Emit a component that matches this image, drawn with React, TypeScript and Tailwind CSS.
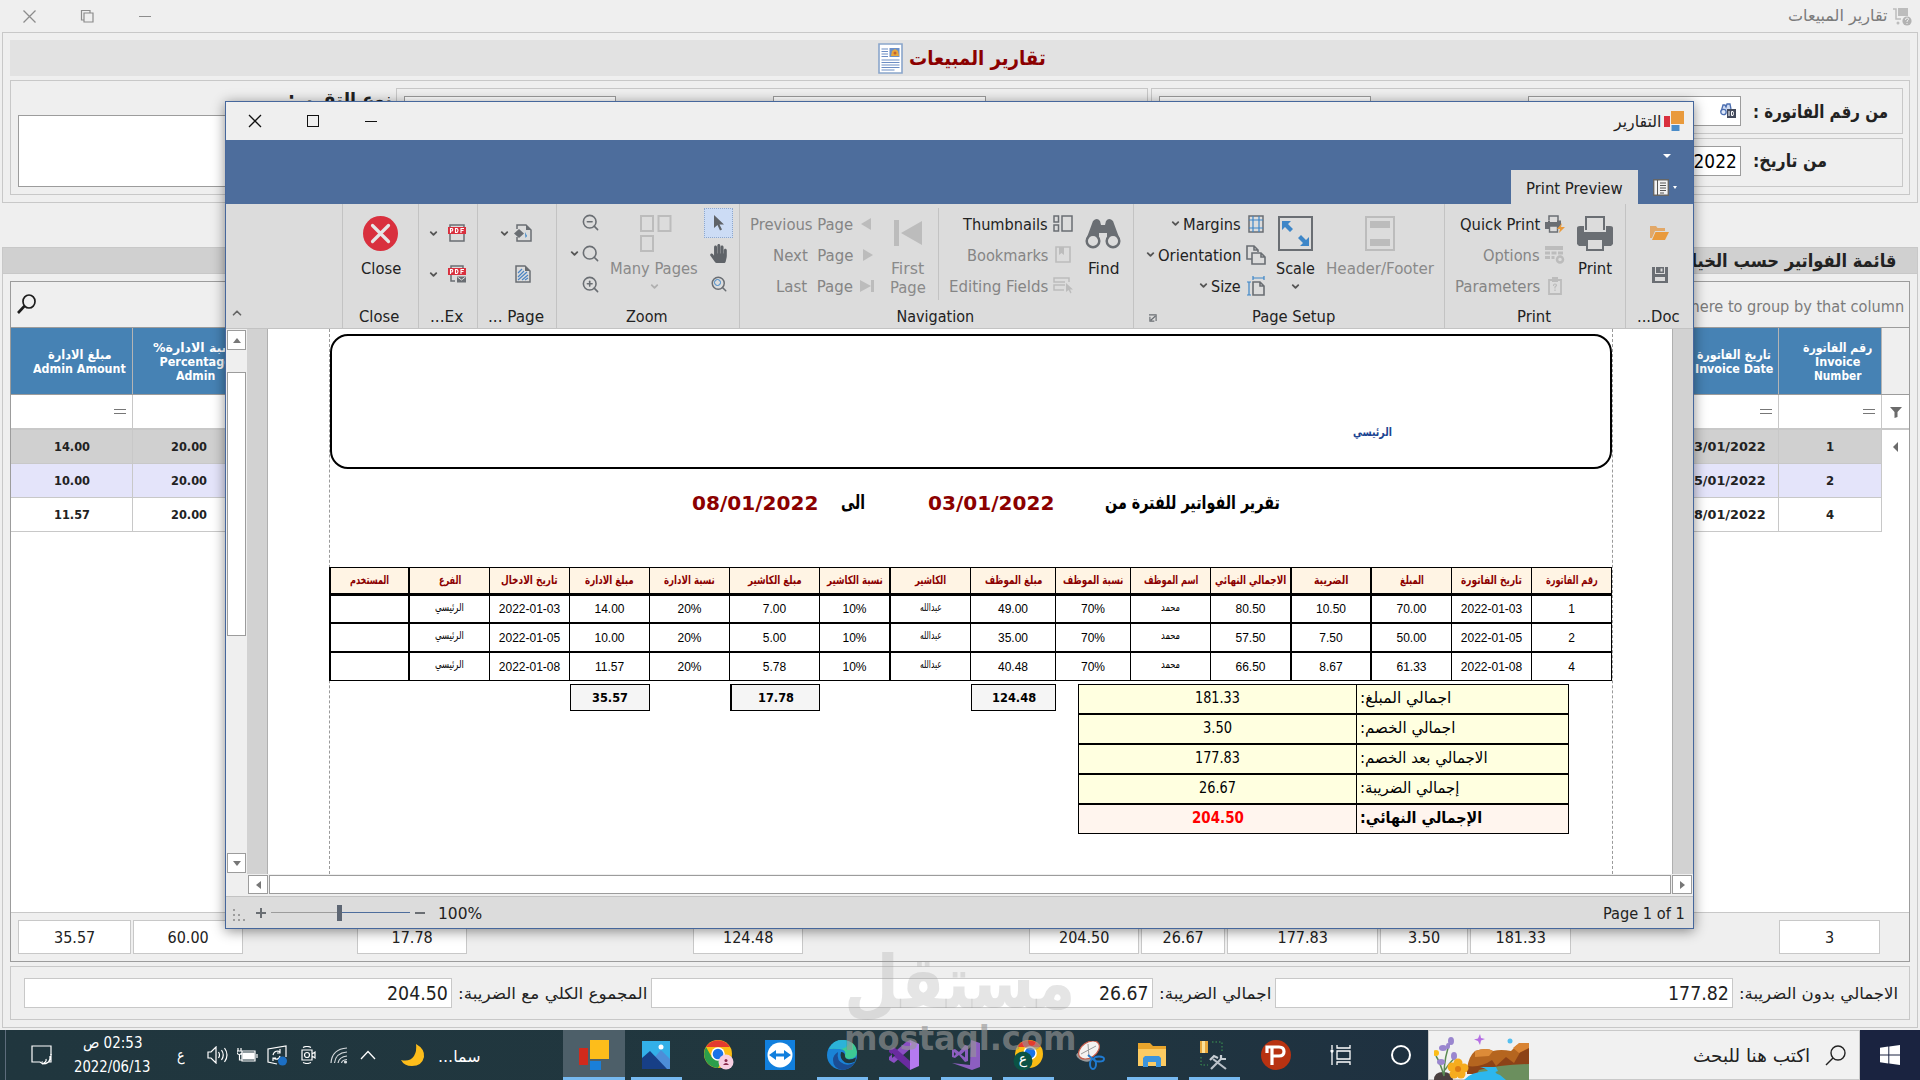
import { useLayoutEffect, useRef, useState, type ReactNode } from "react";
import clsx from "clsx";
import { FaHandPaper } from "react-icons/fa";
import { ChevronDown, ChevronUp, Search, ZoomIn, ZoomOut } from "lucide-react";

const TAHOMA = "font-['DejaVu_Sans_Condensed','DejaVu_Sans',sans-serif]";

// Single line label stretched to an exact width
function Fit({ w, className, children }: { w: number; className?: string; children: ReactNode }) {
  const ref = useRef<HTMLSpanElement>(null);
  const [scale, setScale] = useState(1);

  useLayoutEffect(() => {
    if (ref.current) setScale(w / ref.current.offsetWidth);
  }, [w, children]);

  return (
    <span dir="ltr" className={clsx("inline-flex shrink-0", className)} style={{ width: w }}>
      <span
        ref={ref}
        dir="auto"
        className="inline-block shrink-0 origin-left whitespace-pre"
        style={{ transform: `scaleX(${scale})` }}
      >
        {children}
      </span>
    </span>
  );
}

/* ---------- main window ---------- */

function TitleBar() {
  return (
    <div className="flex h-8 shrink-0 items-center">
      <svg className="ml-[22px] size-[15px]" viewBox="0 0 15 15" stroke="#8c8c8c" strokeWidth="1.3">
        <path d="M1.5 1.5l12 12M13.5 1.5l-12 12" />
      </svg>
      <svg className="ml-[43px] size-[15px]" viewBox="0 0 15 15" fill="none" stroke="#8c8c8c" strokeWidth="1.2">
        <path d="M4 11H1.5V1.5H10V4M4 4h9v9H4z" />
      </svg>
      <div className="ml-[44px] h-px w-3 bg-[#8c8c8c]" />
      <Fit w={99} className="ml-auto text-[16px] text-[#7b7b7b]">تقارير المبيعات</Fit>
      <svg className="mr-[8px] ml-[6px] size-[19px]" viewBox="0 0 19 19">
        <path d="M0 2h3v10h5" fill="none" stroke="#bdbdbd" strokeWidth="1.5" />
        <path d="M5 1h10v8H5z" fill="#bdbdbd" />
        <circle cx="5" cy="16" r="1.5" fill="#bdbdbd" />
        <circle cx="14" cy="14" r="4.6" fill="#b3b3b3" />
        <path d="M12.5 13q0-2 1.6-2t1.4 1.6l-1.4 1.4v1M14 16v1" fill="none" stroke="#efefef" />
      </svg>
    </div>
  );
}

function ReportIcon() {
  return (
    <svg className="mr-[6px] h-[31px] w-[25px]" viewBox="0 0 25 31">
      <path d="M1 1h23v29H1z" fill="#fff" stroke="#8aa6cb" strokeWidth="1.6" />
      <path d="M3.500 6h6.500M3.500 8.500h6.500M3.500 11h6.500M3.500 13.500h6.500M3.500 17h18M3.500 19.500h18M3.500 22h18M3.500 24.500h18M3.500 27h13" stroke="#6d8dc4" strokeWidth="1.200" />
      <path d="M11.500 5h10v9h-10z" fill="#6a8fc9" />
      <path d="M13 13l1-5 3-2 3 2 1 5z" fill="#e7a73c" />
      <circle cx="17" cy="10" r="1.500" fill="#c5612c" />
    </svg>
  );
}

const box = "border border-[#c8c8c8]";
const field = "border border-[#9c9c9c] bg-white";

function Filters() {
  return (
    <div className={clsx("mx-[2px] flex h-[171px] shrink-0 flex-col px-[7px] pt-[7px]", box)}>
      <div className="flex h-9 shrink-0 items-center justify-center bg-[#e2e2e2] pl-[4px]">
        <ReportIcon />
        <Fit w={137} className="text-[20px] font-bold text-[#8b0000]">تقارير المبيعات</Fit>
      </div>
      <div className={clsx("mt-1 flex h-[115px]", box)}>
        <div className="flex w-[385px] flex-col pl-[7px] pt-[4px]">
          <Fit w={104} className="ml-[270px] h-[30px] text-[19px] font-bold text-[#222]">نوع التقرير:</Fit>
          <div className={clsx("h-[72px]", field)} />
        </div>
        <div className={clsx("mt-[7px] flex h-[100px] w-[752px] pl-[7px] pt-[7px]", box)}>
          <div className={clsx("h-[30px] w-[212px]", field)} />
          <div className={clsx("ml-[157px] h-[30px] w-[213px]", field)} />
        </div>
        <div className="ml-[3px] mt-[7px] flex w-[752px] flex-col gap-1">
          <div className={clsx("flex h-[46px] items-center pl-[7px]", box)}>
            <div className={clsx("h-[30px] w-[212px]", field)} />
            <div className={clsx("ml-[157px] flex h-[30px] w-[213px] items-center justify-end pr-1", field)}>
              <svg className="size-4" viewBox="0 0 16 16">
                <path d="M1 9L3 2h2l1 2 1-3h3l1 5" fill="#cfdcf3" stroke="#4a6db0" strokeWidth="1.300" />
                <circle cx="3.500" cy="9" r="2.700" fill="#dfe9fa" stroke="#4a6db0" strokeWidth="1.300" />
                <path d="M7 6h9v9H7z" fill="#434a5c" />
                <path d="M9 8v5M11.500 8.500v4h1.500q1-2 0-4z" fill="none" stroke="#fff" />
              </svg>
            </div>
            <Fit w={135} className="ml-3 text-[18px] font-bold text-[#222]">من رقم الفاتورة :</Fit>
          </div>
          <div className={clsx("flex h-[49px] items-start pl-[7px] pt-[7px]", box)}>
            <div className={clsx("h-[30px] w-[212px]", field)} />
            <div className={clsx("ml-[157px] flex h-[30px] w-[213px] items-center justify-end pr-[3px] text-[20px]", field)}>
              <Fit w={98}>03/01/2022</Fit>
            </div>
            <Fit w={74} className="mt-[1px] ml-3 text-[18px] font-bold text-[#222]">من تاريخ:</Fit>
          </div>
        </div>
      </div>
    </div>
  );
}

const gridRows = [
  { bg: "bg-[#d0d0d0]", amount: "14.00", date: "03/01/2022", num: "1" },
  { bg: "bg-[#e4e4fa]", amount: "10.00", date: "05/01/2022", num: "2" },
  { bg: "bg-white", amount: "11.57", date: "08/01/2022", num: "4" },
];

const footerCells = [
  { cls: "ml-[7px] w-[113px]", v: "35.57", w: 41 },
  { cls: "ml-[2px] w-[110px]", v: "60.00", w: 41 },
  { cls: "ml-[114px] w-[110px]", v: "17.78", w: 41 },
  { cls: "ml-[226px] w-[110px]", v: "124.48", w: 50 },
  { cls: "ml-[226px] w-[110px]", v: "204.50", w: 50 },
  { cls: "ml-[2px] w-[84px]", v: "26.67", w: 41 },
  { cls: "ml-[2px] w-[151px]", v: "177.83", w: 50 },
  { cls: "ml-[2px] w-[88px]", v: "3.50", w: 32 },
  { cls: "ml-[2px] w-[101px]", v: "181.33", w: 50 },
  { cls: "ml-[208px] w-[101px]", v: "3", w: 9 },
];

function HeadCell({ className, lines }: { className: string; lines: [string, number][] }) {
  return (
    <div className={clsx("flex flex-col items-center justify-center bg-[#4682b4] pt-[1px] text-[12.5px] leading-[14px] font-bold text-white", className)}>
      {lines.map(([t, w]) => (
        <Fit key={t} w={w}>{t}</Fit>
      ))}
    </div>
  );
}

function EqualMark() {
  return <div className="mr-[6px] h-[5px] w-3 border-y border-[#777]" />;
}

function InvoiceGrid() {
  return (
    <div className="flex h-[681px] flex-col border border-[#9c9c9c] bg-white">
      <div className="flex h-[45px] shrink-0 items-center justify-between bg-[#efefef] pr-[5px] pl-[6px]">
        <svg className="-mt-[1px] h-[20px] w-[19px]" viewBox="0 0 19 20" fill="none" stroke="#1c1c1c">
          <ellipse cx="12" cy="7.500" rx="6" ry="6.500" strokeWidth="1.700" />
          <path d="M7.500 12L1 19" strokeWidth="2.600" />
        </svg>
        <Fit w={381} className="mt-[5px] text-[16px] text-[#7b7b7b]">Drag a column header here to group by that column</Fit>
      </div>
      <div className="flex h-[68px] shrink-0 border-y border-[#9c9c9c] bg-[#efefef]">
        <HeadCell className="w-[122px] border-r border-[#b4b4b4] pl-4" lines={[["مبلغ الادارة", 64], ["Admin Amount", 93]]} />
        <HeadCell className="w-[113px] pl-3" lines={[["نسبة الادارة%", 86], ["Percentage", 72], ["Admin", 39]]} />
        <HeadCell className="ml-auto w-[113px] border-r border-[#b4b4b4] pl-[23px]" lines={[["تاريخ الفاتورة", 74], ["Invoice Date", 78]]} />
        <HeadCell className="w-[103px] border-r border-[#b4b4b4] pl-[15px]" lines={[["رقم الفاتورة", 69], ["Invoice", 45], ["Number", 47]]} />
        <div className="w-[27px]" />
      </div>
      <div className="flex h-[35px] shrink-0 border-b-2 border-[#c8c8c8]">
        <div className="flex w-[122px] items-center justify-end border-r border-[#c8c8c8]"><EqualMark /></div>
        <div className="ml-auto flex w-[113px] items-center justify-end border-r border-[#c8c8c8]"><EqualMark /></div>
        <div className="flex w-[103px] items-center justify-end border-r border-[#c8c8c8]"><EqualMark /></div>
        <div className="flex w-[27px] items-center justify-center">
          <svg className="size-3" viewBox="0 0 12 12" fill="#6b6b6b"><path d="M0 1h12L7.500 6v5l-3 1V6z" /></svg>
        </div>
      </div>
      {gridRows.map((r, i) => (
        <div key={r.num} className="flex h-[34px] shrink-0 text-[13px] font-bold text-[#222]">
          <div className={clsx("flex w-[122px] items-center justify-center border-r border-b border-[#c8c8c8]", r.bg)}>
            <Fit w={36}>{r.amount}</Fit>
          </div>
          <div className={clsx("flex w-[112px] items-center justify-center border-b border-[#c8c8c8]", r.bg)}>
            <Fit w={36}>20.00</Fit>
          </div>
          <div className={clsx("ml-auto flex w-[113px] items-center justify-end border-r border-b border-[#c8c8c8] pr-3", r.bg)}>
            <Fit w={81}>{r.date}</Fit>
          </div>
          <div className={clsx("flex w-[103px] items-center justify-center border-r border-b border-[#c8c8c8]", r.bg)}>
            <Fit w={8}>{r.num}</Fit>
          </div>
          <div className="flex w-[27px] items-center justify-center">
            {i === 0 && <div className="border-y-[5px] border-r-[5px] border-y-transparent border-r-[#6b6b6b]" />}
          </div>
        </div>
      ))}
      <div className="mt-auto flex h-[49px] border-t border-[#c8c8c8] bg-[#efefef] pt-[7px]">
        {footerCells.map((c, i) => (
          <div key={i} className={clsx("flex h-[34px] shrink-0 items-center justify-center pt-[2px] text-[16px] text-[#222]", box, "bg-white", c.cls)}>
            <Fit w={c.w}>{c.v}</Fit>
          </div>
        ))}
      </div>
    </div>
  );
}

function TotalsPanel() {
  const value = clsx("flex h-[30px] items-center justify-end pr-[3px] text-[20px] text-[#222]", box, "bg-white");
  const label = "text-[16px] text-[#222] mt-[2px]";
  return (
    <div className={clsx("mt-1 flex h-[54px] items-center pl-[13px]", box)}>
      <div className={clsx(value, "w-[428px]")}><Fit w={61}>204.50</Fit></div>
      <Fit w={189} className={clsx(label, "ml-[6px]")}>المجموع الكلي مع الضريبة:</Fit>
      <div className={clsx(value, "ml-[4px] w-[502px]")}><Fit w={50}>26.67</Fit></div>
      <Fit w={112} className={clsx(label, "ml-[6px]")}>اجمالي الضريبة:</Fit>
      <div className={clsx(value, "ml-[4px] w-[458px]")}><Fit w={61}>177.82</Fit></div>
      <Fit w={159} className={clsx(label, "ml-[6px]")}>الاجمالي بدون الضريبة:</Fit>
    </div>
  );
}

/* ---------- report dialog ---------- */

const G = "#6a6e73";
const D = "#bcbcbc";

function Chev({ className, light }: { className?: string; light?: boolean }) {
  return <ChevronDown className={clsx("size-[11px] shrink-0", light ? "text-[#b0b0b0]" : "text-[#555]", className)} strokeWidth={4} />;
}

function Group({ className, label, w, children, labelClass }: { className: string; label: string; w: number; children: ReactNode; labelClass?: string }) {
  return (
    <div className={clsx("flex h-[124px] shrink-0 flex-col border-l border-[#c3c3c3]", className)}>
      <div className="flex h-[102px]">{children}</div>
      <div className={clsx("flex h-[22px] items-center justify-center pr-[2px]", labelClass)}>
        <Fit w={w}>{label}</Fit>
      </div>
    </div>
  );
}

function PdfIcon({ mail }: { mail?: boolean }) {
  return (
    <svg className="size-[18px]" viewBox="0 0 18 18">
      <path d={mail ? "M3 4V1h12v3M3 9v7h4" : "M2 4V1h14v3M2 9v8h14V9"} fill="none" stroke={G} strokeWidth="1.500" />
      <path d="M0 3h18v7H0z" fill="#d9303e" />
      <path d="M2.500 9V4.500h1.500q1.500 1.200 0 2.500h-1.500M7.500 4.500v4h1.500q2-2 0-4zM13 9V4.500h3M13 6.500h2.500" fill="none" stroke="#fff" strokeWidth="1.100" />
      {mail && <path d="M9 11.500h9v6H9z" fill={G} />}
      {mail && <path d="M9.500 12l4 3 4-3" fill="none" stroke="#dcdcdc" />}
    </svg>
  );
}

function BigButton({ className, label, w, disabled, children }: { className?: string; label: string; w: number; disabled?: boolean; children: ReactNode }) {
  return (
    <div className={clsx("flex flex-col items-center pt-3", disabled && "text-[#8a8a8a]", className)}>
      <div className="flex h-[34px] items-center">{children}</div>
      <Fit w={w} className="mt-[9px] h-5 leading-5">{label}</Fit>
    </div>
  );
}

function SmallRow({ label, w, disabled, chev, children }: { label: string; w: number; disabled?: boolean; chev?: boolean; children: ReactNode }) {
  return (
    <div className={clsx("flex h-[31px] items-center justify-end", disabled && "text-[#858585]")}>
      {chev && <Chev className="mr-[2px]" />}
      <Fit w={w} className="mt-[2px]">{label}</Fit>
      <div className="ml-[5px] flex w-5 justify-center">{children}</div>
    </div>
  );
}

function Ribbon() {
  return (
    <div className="flex h-[125px] border-b border-[#c3c3c3] bg-[#dcdcdc] text-[16px] text-[#222]">
      <div className="flex w-[116px] items-end pb-[8px] pl-[4px]">
        <ChevronUp className="size-[14px] text-[#666]" strokeWidth={3} />
      </div>
      <Group className="w-[76px]" label="Close" w={40} labelClass="pr-[4px]">
        <BigButton className="w-full" label="Close" w={40}>
          <svg className="size-[35px]" viewBox="0 0 35 35">
            <circle cx="17.500" cy="17.500" r="17.500" fill="#d9303e" />
            <path d="M9.500 9.500l16 16M25.500 9.500l-16 16" stroke="#e6e6e6" strokeWidth="3.200" strokeLinecap="round" />
          </svg>
        </BigButton>
      </Group>
      <Group className="w-[59px]" label="...Ex" w={33} labelClass="pr-[4px]">
        <div className="flex flex-col gap-[23px] pt-5 pl-[9px]">
          <div className="flex items-center gap-[9px]"><Chev /><PdfIcon /></div>
          <div className="flex items-center gap-[9px]"><Chev /><PdfIcon mail /></div>
        </div>
      </Group>
      <Group className="w-[79px]" label="... Page" w={56}>
        <div className="flex w-full flex-col items-end gap-[23px] pt-5 pr-[24px]">
          <div className="flex items-center gap-[4px]">
            <Chev />
            <svg className="size-[18px]" viewBox="0 0 18 18">
              <path d="M3 5V1h9l5 5v11H3v-4" fill="none" stroke={G} strokeWidth="1.500" />
              <path d="M12 1v5h5z" fill={G} />
              <path d="M5 5l5 4.500L5 14 0 9.500z" fill={G} />
              <path d="M11 8l2 4-1.500 2z" fill="#3d86c8" />
            </svg>
          </div>
          <svg className="size-[18px]" viewBox="0 0 18 18">
            <path d="M2 1h9l5 5v11H2z" fill="none" stroke={G} strokeWidth="1.500" />
            <path d="M11 1v5h5z" fill={G} />
            <path d="M4 8l4-4M4 12l6-6M4 15l9-8M8 15l6-5M11 15l3-2" stroke="#4a84c4" strokeWidth="1.200" />
          </svg>
        </div>
      </Group>
      <Group className="w-[183px]" label="Zoom" w={42}>
        <div className="flex w-[43px] flex-col items-end pt-[3px]">
          <div className="flex h-[31px] items-center"><ZoomOut className="size-[19px] text-[#6a6e73]" strokeWidth={2} /></div>
          <div className="flex h-[31px] items-center gap-[1px]"><Chev /><Search className="size-[19px] text-[#6a6e73]" strokeWidth={2} /></div>
          <div className="flex h-[31px] items-center"><ZoomIn className="size-[19px] text-[#6a6e73]" strokeWidth={2} /></div>
        </div>
        <div className="flex w-[104px] flex-col items-center pl-1">
          <BigButton label="Many Pages" w={88} disabled>
            <svg className="-mr-[3px] h-[37px] w-8" viewBox="0 0 32 37" fill="none" stroke={D} strokeWidth="2">
              <path d="M1 1h12v15H1zM18.500 1h12v15h-12zM1 21h12v15H1z" />
            </svg>
          </BigButton>
          <Chev light className="mt-[2px]" />
        </div>
        <div className="flex w-[29px] flex-col items-center pt-1">
          <div className="flex h-[30px] w-[29px] items-center justify-center border border-dotted border-[#8fa8cc] bg-[#ccdcf5]">
            <svg className="h-4 w-3" viewBox="0 0 12 16"><path d="M1 0v13l3.500-3 2.500 5.500 2-1-2.500-5H11z" fill="#5f6368" /></svg>
          </div>
          <FaHandPaper className="mt-[6px] size-[19px] text-[#5f6368]" />
          <div className="relative mt-[12px]">
            <Search className="size-[18px] text-[#6a6e73]" strokeWidth={2} />
            <div className="absolute top-[4px] left-[4px] size-[7px] rounded-full border-[1.500px] border-[#3d86c8]" />
          </div>
        </div>
      </Group>
      <Group className="w-[394px]" label="Navigation" w={78}>
        <div className="flex w-[138px] flex-col pt-1">
          <SmallRow label="Previous Page" w={103} disabled>
            <div className="mr-[5px] border-y-[6px] border-r-[10px] border-y-transparent border-r-[#bcbcbc]" />
          </SmallRow>
          <SmallRow label="Next  Page" w={80} disabled>
            <div className="border-y-[6px] border-l-[10px] border-y-transparent border-l-[#bcbcbc]" />
          </SmallRow>
          <SmallRow label="Last  Page" w={77} disabled>
            <div className="mr-[2px] flex"><div className="border-y-[6px] border-l-[11px] border-y-transparent border-l-[#bcbcbc]" /><div className="h-3 w-[3px] bg-[#bcbcbc]" /></div>
          </SmallRow>
        </div>
        <div className="flex w-[60px] flex-col items-center pr-px">
          <BigButton label="First" w={33} disabled>
            <svg className="h-[26px] w-7" viewBox="0 0 28 26" fill={D}><path d="M0 0h5v26H0zM28 1v24L7 13z" /></svg>
          </BigButton>
          <Fit w={36} className="-mt-[1px] leading-5 text-[#8a8a8a]">Page</Fit>
        </div>
        <div className="mt-1 h-[92px] w-px bg-[#c3c3c3]" />
        <div className="flex w-[134px] flex-col pt-1">
          <SmallRow label="Thumbnails" w={85}>
            <svg className="h-[17px] w-5" viewBox="0 0 20 17" fill="none" stroke={G} strokeWidth="1.500"><path d="M1 1h4.500v6H1zM1 10h4.500v6H1zM9 1h10v15H9z" /></svg>
          </SmallRow>
          <SmallRow label="Bookmarks" w={81} disabled>
            <svg className="h-[17px] w-5" viewBox="0 0 20 17" fill="none" stroke={D} strokeWidth="1.600"><path d="M3 1h14v15H3z" /><path d="M6 1h5v8L8.500 7 6 9z" fill={D} stroke="none" /></svg>
          </SmallRow>
          <SmallRow label="Editing Fields" w={99} disabled>
            <svg className="h-[17px] w-5" viewBox="0 0 20 17" fill="none" stroke={D} strokeWidth="1.500"><path d="M12 5H1V1h15v4M12 8H1v5h10" /><path d="M13 6v9l2.500-2 2 3.500 1-1-1.500-3h3z" fill={D} stroke="none" /></svg>
          </SmallRow>
        </div>
        <BigButton className="ml-[5px] w-[50px]" label="Find" w={31}>
          <svg className="h-[31px] w-9" viewBox="0 0 36 31">
            <path d="M8 3q4-4 7 0l1 4h4l1-4q3-4 7 0l7 19H22v-7h-8v7H1z" fill={G} />
            <circle cx="8" cy="23" r="6.300" fill="#dcdcdc" stroke={G} strokeWidth="2.500" />
            <circle cx="28" cy="23" r="6.300" fill="#dcdcdc" stroke={G} strokeWidth="2.500" />
          </svg>
        </BigButton>
      </Group>
      <div className="relative">
        <Group className="w-[311px]" label="Page Setup" w={83} labelClass="pl-[10px]">
          <div className="flex w-[132px] flex-col pt-1">
            <SmallRow label="Margins" w={58} chev>
              <svg className="h-[18px] w-4" viewBox="0 0 16 18" fill="none"><path d="M1 1h14v16H1z" stroke={G} strokeWidth="1.500" /><path d="M5 1v16M11 1v16M1 5h14M1 13h14" stroke="#3d86c8" strokeWidth="1.200" /></svg>
            </SmallRow>
            <SmallRow label="Orientation" w={83} chev>
              <svg className="h-5 w-5" viewBox="0 0 20 20" fill="none" stroke={G} strokeWidth="1.600"><path d="M6 14H1V1h7l4 4v2M8 1v4h4M6 8h9l4 4v7H6zM15 8v4h4" /></svg>
            </SmallRow>
            <SmallRow label="Size" w={30} chev>
              <svg className="h-5 w-[18px]" viewBox="0 0 18 20" fill="none"><path d="M6 6h7l4 4v9H6zM13 6v4h4" stroke={G} strokeWidth="1.600" /><path d="M6 2h11M6 0v4M17 0v4M2 6v13M0 6h4M0 19h4" stroke="#3d86c8" strokeWidth="1.200" /></svg>
            </SmallRow>
          </div>
          <div className="ml-[8px] flex w-[43px] flex-col items-center">
            <BigButton label="Scale" w={39}>
              <svg className="size-[35px]" viewBox="0 0 35 35"><path d="M1 1h33v33H1z" fill="none" stroke={G} strokeWidth="2" /><path d="M4 5h9l-3 3 5 5-3 3-5-5-3 3zM31 30h-9l3-3-5-5 3-3 5 5 3-3z" fill="#3d86c8" /></svg>
            </BigButton>
            <Chev className="mt-[2px]" />
          </div>
          <BigButton className="ml-[9px]" label="Header/Footer" w={108} disabled>
            <svg className="h-[35px] w-[30px]" viewBox="0 0 30 35"><path d="M1 1h28v33H1z" fill="none" stroke={D} strokeWidth="2" /><path d="M5 5h20v7H5zM5 23h20v7H5z" fill={D} /></svg>
          </BigButton>
        </Group>
        <svg className="absolute top-[110px] left-[16px] size-[8px]" viewBox="0 0 9 9" fill="none" stroke={G}><path d="M0 1h8v7M7 2.500L2 7M1 3v5h5" strokeWidth="1.300" /></svg>
      </div>
      <Group className="w-[181px]" label="Print" w={34}>
        <div className="flex w-[120px] flex-col pt-1">
          <SmallRow label="Quick Print" w={80}>
            <svg className="h-[18px] w-5" viewBox="0 0 20 18"><path d="M4 5V1h9v5" fill="none" stroke={G} strokeWidth="1.500" /><path d="M0 7h3V5.500h2V7h7V5.500h4V10l-3 4H0z" fill={G} /><path d="M4.500 11h8v6h-8z" fill="#dcdcdc" stroke={G} strokeWidth="1.400" /><path d="M17 8l-5 6h3l-1 4 6-6h-4z" fill="#e99a3c" /></svg>
          </SmallRow>
          <SmallRow label="Options" w={57} disabled>
            <svg className="h-[18px] w-5" viewBox="0 0 20 18" fill={D}><path d="M0 0h18v4H0zM0 5.500h5v3H0zM6.500 5.500h5v3h-5zM13 5.500h5v3h-5zM0 10h5v3H0zM6.500 10h3v3h-3z" /><circle cx="15" cy="13.500" r="3" fill="none" stroke={D} strokeWidth="2.500" /></svg>
          </SmallRow>
          <SmallRow label="Parameters" w={85} disabled>
            <svg className="h-[18px] w-5" viewBox="0 0 20 18" fill="none" stroke={D} strokeWidth="1.800"><path d="M4 3h12v14H4z" /><path d="M7 0h6v5H7z" fill={D} stroke="none" /><path d="M8.500 9q0-2 1.500-2t1.500 1.500L10 10v1.500M10 12.500V14" strokeWidth="1.200" /></svg>
          </SmallRow>
        </div>
        <BigButton className="ml-[8px] w-[44px]" label="Print" w={34}>
          <svg className="h-[35px] w-9" viewBox="0 0 36 35"><path d="M9 14V1h18v13" fill="none" stroke={G} strokeWidth="2" /><path d="M0 12q0-2 3-2h4v6h22v-6h4q3 0 3 2v16l-2 2H2l-2-2z" fill={G} /><path d="M10 23h16v11H10z" fill="#dcdcdc" stroke={G} strokeWidth="2" /></svg>
        </BigButton>
      </Group>
      <Group className="w-[68px]" label="...Doc" w={43}>
        <div className="flex w-full flex-col items-center gap-[26px] pt-[21px]">
          <svg className="h-4 w-[19px]" viewBox="0 0 19 16"><path d="M0 1h6l1.500 2H15v3H5L2 13H0z" fill="#e2a868" /><path d="M5.500 7H19l-4 8H2z" fill="#e99a3c" /></svg>
          <svg className="size-4" viewBox="0 0 16 16"><path d="M0 0h3v7h10V0h3v16H0z" fill={G} /><path d="M4 0h8v6H4z" fill={G} /><path d="M8.500 1.500h2v3h-2zM3 10h10v4H3z" fill="#dcdcdc" /></svg>
        </div>
      </Group>
    </div>
  );
}

const columns = [
  { cls: "w-[79px] border-l-2", head: "المستخدم", w: 39 },
  { cls: "w-[81px] border-l-2", head: "الفرع", w: 22 },
  { cls: "w-[80px] border-l", head: "تاريخ الادخال", w: 57 },
  { cls: "w-[80px] border-l", head: "مبلغ الادارة", w: 49 },
  { cls: "w-[80px] border-l", head: "نسبة الادارة", w: 51 },
  { cls: "w-[90px] border-l", head: "مبلغ الكاشير", w: 54 },
  { cls: "w-[70px] border-l", head: "نسبة الكاشير", w: 56 },
  { cls: "w-[81px] border-l-2", head: "الكاشير", w: 31 },
  { cls: "w-[85px] border-l", head: "مبلغ الموظف", w: 57 },
  { cls: "w-[75px] border-l", head: "نسبة الموظف", w: 60 },
  { cls: "w-[80px] border-l", head: "اسم الموظف", w: 54 },
  { cls: "w-[80px] border-l", head: "الاجمالي النهائي", w: 71 },
  { cls: "w-[80px] border-l-2", head: "الضريبة", w: 34 },
  { cls: "w-[81px] border-l-2", head: "المبلغ", w: 24 },
  { cls: "w-[80px] border-l", head: "تاريخ الفاتورة", w: 61 },
  { cls: "w-[81px] border-x", head: "رقم الفاتورة", w: 52 },
];

const reportRows = [
  ["", "الرئيسي", "2022-01-03", "14.00", "20%", "7.00", "10%", "عبدالله", "49.00", "70%", "محمد", "80.50", "10.50", "70.00", "2022-01-03", "1"],
  ["", "الرئيسي", "2022-01-05", "10.00", "20%", "5.00", "10%", "عبدالله", "35.00", "70%", "محمد", "57.50", "7.50", "50.00", "2022-01-05", "2"],
  ["", "الرئيسي", "2022-01-08", "11.57", "20%", "5.78", "10%", "عبدالله", "40.48", "70%", "محمد", "66.50", "8.67", "61.33", "2022-01-08", "4"],
];
const rowHeights = ["h-[28px] border-b-2", "h-[29px] border-b-2", "h-[28px] border-b"];

const arabicWidth: Record<string, number> = { "الرئيسي": 29, "عبدالله": 22, "محمد": 19 };

const summary = [
  { value: "181.33", vw: 45, label: "اجمالي المبلغ:", lw: 91 },
  { value: "3.50", vw: 29, label: "اجمالي الخصم:", lw: 95 },
  { value: "177.83", vw: 45, label: "الاجمالي بعد الخصم:", lw: 128 },
  { value: "26.67", vw: 37, label: "إجمالي الضريبة:", lw: 99 },
];

function ReportPage() {
  return (
    <div className="flex w-[1284px] flex-col border-x border-dashed border-[#9a9a9a] pt-[5px]">
      <div className="flex h-[135px] shrink-0 items-start justify-end rounded-[18px] border-[2.500px] border-black pt-[87px] pr-[218px]">
        <Fit w={39} className="text-[12px] font-bold text-[#1c4592]">الرئيسي</Fit>
      </div>
      <div className="flex h-[98px] shrink-0 items-start pt-[20px] pl-[362px] text-[20px] leading-7 font-bold text-black">
        <Fit w={126} className="text-[#8b0000]">08/01/2022</Fit>
        <Fit w={24} className="-mt-[1px] ml-[23px]">الى</Fit>
        <Fit w={126} className="ml-[63px] text-[#8b0000]">03/01/2022</Fit>
        <Fit w={175} className="-mt-[1px] ml-[51px] text-[19px]">تقرير الفواتير للفترة من</Fit>
      </div>
      <div className="-ml-px flex h-[29px] w-[1283px] shrink-0 border-t border-b-[3px] border-black bg-[#fff4e4] text-[11.500px] font-bold text-[#8b0000]">
        {columns.map((c) => (
          <div key={c.head} className={clsx("flex shrink-0 items-center justify-center border-black", c.cls)}>
            <Fit w={c.w}>{c.head}</Fit>
          </div>
        ))}
      </div>
      {reportRows.map((row, r) => (
        <div key={r} className={clsx("-ml-px flex w-[1283px] shrink-0 border-black text-[12px] text-black", rowHeights[r])}>
          {row.map((v, i) => (
            <div key={i} className={clsx("flex shrink-0 items-center justify-center border-black font-['Liberation_Sans','DejaVu_Sans',sans-serif]", columns[i].cls)}>
              {arabicWidth[v] ? (
                <Fit w={arabicWidth[v]} className="mb-[5px] text-[11px] leading-4">{v}</Fit>
              ) : (
                <span>{v}</span>
              )}
            </div>
          ))}
        </div>
      ))}
      <div className="mt-[3px] flex items-start pl-[240px] text-[13px] font-bold text-black">
        <div className="flex h-[27px] w-[80px] items-center justify-center border border-black bg-[#f5f5f5]"><Fit w={36}>35.57</Fit></div>
        <div className="ml-[80px] flex h-[27px] w-[90px] items-center justify-center border border-l-2 border-black bg-[#f5f5f5]"><Fit w={36}>17.78</Fit></div>
        <div className="ml-[151px] flex h-[27px] w-[85px] items-center justify-center border border-black bg-[#f5f5f5]"><Fit w={44}>124.48</Fit></div>
        <div className="ml-[22px] flex w-[491px] flex-col border border-black text-[15.500px] font-normal">
          {summary.map((s) => (
            <div key={s.label} className="flex h-[30px] border-b-2 border-black bg-[#ffffe0]">
              <div className="flex w-[278px] items-center justify-center border-r border-black"><Fit w={s.vw}>{s.value}</Fit></div>
              <div className="flex items-center pl-[3px]"><Fit w={s.lw}>{s.label}</Fit></div>
            </div>
          ))}
          <div className="flex h-[28px] bg-[#fff5ee] font-bold">
            <div className="flex w-[278px] items-center justify-center border-r border-black text-[#f00]"><Fit w={52}>204.50</Fit></div>
            <div className="flex items-center pl-[3px]"><Fit w={122}>الإجمالي النهائي:</Fit></div>
          </div>
        </div>
      </div>
    </div>
  );
}

const scrollButton = "flex items-center justify-center border border-[#9c9c9c] bg-white";

function PreviewDialog() {
  return (
    <div className="absolute top-[101px] left-[225px] flex h-[828px] w-[1469px] flex-col border border-[#46679c] bg-[#efefef] shadow-[0_2px_12px_rgba(0,0,0,0.45)]">
      <div className="flex h-[38px] shrink-0 items-center">
        <svg className="ml-[22px] size-[14px]" viewBox="0 0 14 14" stroke="#111" strokeWidth="1.300"><path d="M1 1l12 12M13 1L1 13" /></svg>
        <div className="ml-[45px] size-[12px] border border-[#111]" />
        <div className="ml-[46px] h-px w-3 bg-[#111]" />
        <Fit w={47} className="mt-[2px] ml-auto text-[16px] text-[#222]">التقارير</Fit>
        <svg className="mr-[9px] ml-[3px] size-5" viewBox="0 0 20 20">
          <path d="M0 5h6v11H0z" fill="#d9303e" />
          <path d="M7 0h13v13H7z" fill="#e99a3c" />
          <path d="M7.500 14h8v6h-8z" fill="#4a8cc8" />
        </svg>
      </div>
      <div className="flex h-16 shrink-0 flex-col bg-[#4d6d9c]">
        <div className="flex h-[30px] items-center justify-end pt-[2px] pr-[22px]">
          <div className="border-x-[4px] border-t-[4px] border-x-transparent border-t-white" />
        </div>
        <div className="flex h-[34px] justify-end">
          <div className="flex w-[127px] items-center justify-center bg-[#dcdcdc] pt-[3px] text-[16px] text-[#222]"><Fit w={97}>Print Preview</Fit></div>
          <div className="flex w-[55px] items-center pl-[15px]">
            <svg className="h-[17px] w-4" viewBox="0 0 16 17"><path d="M.7.700h14.600v15.600H.7z" fill="#f3f3f3" stroke="#666" strokeWidth="1.400" /><path d="M4.500 1v15M7 4h6M7 6.500h6M7 9h6M7 11.500h6M7 14h4" stroke="#555" /></svg>
            <div className="ml-[4px] border-x-[2.500px] border-t-[3px] border-x-transparent border-t-white" />
          </div>
        </div>
      </div>
      <Ribbon />
      <div className="flex h-[567px] shrink-0">
        <div className="flex w-[21px] flex-col px-[1px] pt-[1px]">
          <div className={clsx(scrollButton, "h-5")}><div className="border-x-[4px] border-b-[5px] border-x-transparent border-b-[#777]" /></div>
          <div className={clsx(scrollButton, "mt-[22px] h-[264px]")} />
          <div className={clsx(scrollButton, "mt-[217px] h-5")}><div className="border-x-[4px] border-t-[5px] border-x-transparent border-t-[#777]" /></div>
        </div>
        <div className="flex flex-1 flex-col">
          <div className="flex h-[545px] shrink-0 overflow-hidden bg-[#d2d2d2] px-5">
            <div className="flex flex-1 border-x border-[#b0b0b0] bg-white pl-[61px]">
              <ReportPage />
            </div>
          </div>
          <div className="flex h-[22px] items-start gap-[1px] px-[1px] pt-[1px]">
            <div className={clsx(scrollButton, "h-[19px] w-5")}><div className="border-y-[4px] border-r-[5px] border-y-transparent border-r-[#777]" /></div>
            <div className={clsx(scrollButton, "h-[19px] flex-1")} />
            <div className={clsx(scrollButton, "h-[19px] w-5")}><div className="border-y-[4px] border-l-[5px] border-y-transparent border-l-[#777]" /></div>
          </div>
        </div>
      </div>
      <div className="flex flex-1 items-center border-t border-[#c3c3c3] bg-[#dcdcdc] pr-[8px] pl-[7px] text-[16px] text-[#222]">
        <svg className="mt-[5px] size-3" viewBox="0 0 12 12" fill="#9c9c9c"><path d="M0 0h2v2H0zM0 5h2v2H0zM5 5h2v2H5zM0 10h2v2H0zM5 10h2v2H5zM10 10h2v2h-2z" /></svg>
        <svg className="ml-[11px] size-[10px]" viewBox="0 0 10 10" stroke={G} strokeWidth="2"><path d="M0 5h10M5 0v10" /></svg>
        <div className="ml-[5px] h-px w-[66px] bg-[#9c9c9c]" />
        <div className="h-4 w-[5px] bg-[#5d6673]" />
        <div className="h-px w-[68px] bg-[#4d6d9c]" />
        <div className="ml-[5px] h-[2px] w-[10px] bg-[#6a6e73]" />
        <Fit w={44} className="mt-[2px] ml-[13px]">100%</Fit>
        <Fit w={82} className="mt-[2px] ml-auto">Page 1 of 1</Fit>
      </div>
    </div>
  );
}

/* ---------- taskbar ---------- */

function AppTile({ active, running, children }: { active?: boolean; running?: boolean; children: ReactNode }) {
  return (
    <div className={clsx("flex h-[50px] w-[62px] shrink-0 flex-col items-center", active && "bg-[#4d5f69]")}>
      <div className="flex h-[47px] items-center pt-[3px]">{children}</div>
      {(active || running) && <div className={clsx("h-[3px] bg-[#76b9f0]", active ? "w-full" : "w-[51px]")} />}
    </div>
  );
}

function Chrome({ children }: { children: ReactNode }) {
  return (
    <svg className="ml-[2px] size-[30px]" viewBox="0 0 30 30">
      <circle cx="14" cy="14" r="14" fill="#fbbc14" />
      <path d="M2 7a14 14 0 0 1 24 0H14z" fill="#e33b2e" />
      <path d="M2 7a14 14 0 0 0 12 21l6-10.500-12 0z" fill="#2c9e4b" />
      <circle cx="14" cy="14" r="6.800" fill="#fff" />
      <circle cx="14" cy="14" r="5.300" fill="#1a73e8" />
      {children}
    </svg>
  );
}

function Taskbar() {
  return (
    <div className="mt-[2px] flex h-[50px] shrink-0 items-center bg-linear-to-r from-[#20363e] via-[#21373f] to-[#1c2a42] text-white">
      <div className="ml-[5px] h-full w-px bg-[#5d6c7c]" />
      <svg className="ml-[25px] h-[21px] w-[21px]" viewBox="0 0 21 21" fill="none" stroke="#fff" strokeWidth="1.200">
        <path d="M12 17H10.500M9 17H1V1h19v9" /><path d="M20 9v8h-3M19 11q1 8-8 8 5-2 4-5M9 17l3 2" />
      </svg>
      <div className="ml-[22px] flex w-[76px] flex-col items-center text-[15.500px] leading-6">
        <Fit w={59}>02:53 ص</Fit>
        <Fit w={76}>2022/06/13</Fit>
      </div>
      <Fit w={8} className="ml-[27px] text-[16px]">ع</Fit>
      <svg className="ml-[22px] h-[18px] w-[21px]" viewBox="0 0 21 18" fill="none" stroke="#fff" strokeWidth="1.200"><path d="M1 6h3l5-5v16l-5-5H1zM11.500 6q2 3 0 6M14.500 4q3.500 5 0 10M17.500 2q5 7 0 14" /></svg>
      <svg className="ml-[9px] h-[14px] w-[21px]" viewBox="0 0 21 14" fill="none" stroke="#fff" strokeWidth="1.200"><path d="M5 3h13v10H5zM20 6v4M1 0v3M4 0v3M0 3h5v2q-3 3-5 0zM2.500 6v6H5" /><path d="M6 5h11v6H6z" fill="#fff" /></svg>
      <svg className="ml-[9px] size-[21px]" viewBox="0 0 21 21" fill="none" stroke="#fff" strokeWidth="1.200"><path d="M10 19L1 17V4l18-3v11M6 10q1-4 5-4l2 1M13 4v4h-3M13 11q-1 4-5 3l-2-1M6 16v-3h3" /><circle cx="15.500" cy="16" r="4.500" fill="#1c6fc4" stroke="none" /></svg>
      <svg className="ml-[13px] h-[18px] w-[16px]" viewBox="0 0 16 18" fill="none" stroke="#fff" strokeWidth="1.200"><path d="M1 4h10v10H1zM11 8l3-2v6l-3-2M2 1.500q4-2 8 0M2 16.500q4 2 8 0" /><circle cx="6" cy="9" r="2.500" /></svg>
      <svg className="ml-[13px] h-[17px] w-[18px]" viewBox="0 0 18 17" fill="none" stroke="#d5dadd" strokeWidth="1.200"><path d="M1 16Q2 2 17 1M4.500 16Q5.500 6 17 5M8 16q1-6 9-7M11.500 16q.5-3 5.500-3.500" /><circle cx="15.500" cy="15" r="1" fill="#fff" /></svg>
      <svg className="ml-[12px] h-[10px] w-4" viewBox="0 0 16 10" fill="none" stroke="#fff" strokeWidth="1.300"><path d="M1 9l7-7.500L15 9" /></svg>
      <svg className="ml-[25px] size-6" viewBox="0 0 24 24"><path d="M15 1q9 5 8 13-2 9-12 9-8 0-11-6 9 2 13-4 3-5 2-12z" fill="#fdbd1b" /></svg>
      <Fit w={42} className="mt-[3px] ml-[13px] text-[16px]">سما...</Fit>

      <div className="ml-[83px] flex">
        <AppTile active>
          <svg className="size-[30px]" viewBox="0 0 30 30"><path d="M0 8h9v17H0z" fill="#d12a1c" /><path d="M11 0h19v19H11z" fill="#fdbd1b" /><path d="M11 21h11v9H11z" fill="#1a7fd8" /></svg>
        </AppTile>
        <AppTile running>
          <svg className="size-7" viewBox="0 0 28 28"><path d="M0 0h28v28H0z" fill="#33b0e8" /><path d="M11 18l8-9 9 9v10H13z" fill="#4d8ed8" /><path d="M0 17l8-7 17 18H0z" fill="#173f86" /><circle cx="19" cy="6" r="2.500" fill="#fff" /></svg>
        </AppTile>
        <AppTile>
          <Chrome>
            <circle cx="22" cy="22" r="7.500" fill="#f6cfe2" />
            <circle cx="22" cy="20.500" r="1.500" fill="#8a2a4c" />
            <path d="M19 25q3-4 6 0z" fill="#8a2a4c" />
          </Chrome>
        </AppTile>
        <AppTile>
          <svg className="size-[30px]" viewBox="0 0 30 30"><path d="M0 0h30v30H0z" fill="#117fdd" /><circle cx="15" cy="15" r="12.500" fill="#fff" /><path d="M4 15l7-5v3.500h8V10l7 5-7 5v-3.500h-8V20z" fill="#117fdd" /></svg>
        </AppTile>
        <AppTile running>
          <svg className="size-[30px]" viewBox="0 0 30 30">
            <circle cx="15" cy="15" r="15" fill="#1a84d6" />
            <path d="M2 9Q6 0 16 0q13 1 14 12 0 7-8 7-5-1-4-3 2-6-5-7Q6 8 2 9z" fill="#3ccb94" />
            <path d="M2 9Q6 0 16 0q4 0 7 2-3 7-10 7Q6 8 2 9z" fill="#2cb3d8" />
            <path d="M11 12q-2 9 6 12 6 2 11-2-5 8-13 8-9-2-9-10 0-5 5-8z" fill="#1b4d94" />
            <path d="M14 12q4 0 4 4 0 3 4 3.500 4 0 7-2l-1 4q-5 3-10 1-6-4-4-10.500z" fill="#20363e" />
          </svg>
        </AppTile>
        <AppTile running>
          <svg className="size-[30px]" viewBox="0 0 30 30"><path d="M21 0l9 4v22l-9 4z" fill="#b57af0" /><path d="M21 0v9L5 23l-5-3v-3L17 2z" fill="#8a4fc4" /><path d="M0 10l5-3 16 14v9L0 12z" fill="#6a2ba0" /><path d="M3 13v5l3-2.500z" fill="#20363e" /></svg>
        </AppTile>
        <AppTile running>
          <svg className="size-[30px]" viewBox="0 0 30 30"><path d="M20 0l9 3v24l-8 3-20-7 18 2z" fill="#8c5ec0" /><path d="M1 10l3-1 4 3 6-7 3 1v15l-3 1-6-7-4 3-3-1zm2 2v4l2-2zm11-1l-4 3.500 4 3z" fill="#8c5ec0" /></svg>
        </AppTile>
        <AppTile running>
          <svg className="h-[30px] w-[31px]" viewBox="0 0 31 30">
            <circle cx="16" cy="14" r="14" fill="#fbbc14" /><path d="M4 7a14 14 0 0 1 24 0H16z" fill="#e33b2e" />
            <circle cx="17" cy="13" r="6.800" fill="#fff" /><circle cx="17" cy="13" r="5.300" fill="#1a73e8" />
            <circle cx="10" cy="21" r="9.500" fill="#0b5345" />
            <text x="10" y="24" fontSize="14" fill="#fff" textAnchor="middle" fontFamily="DejaVu Sans">ع</text>
          </svg>
        </AppTile>
        <AppTile>
          <svg className="size-[29px]" viewBox="0 0 29 29"><ellipse cx="8" cy="16" rx="8" ry="4" fill="#9a9a9a" transform="rotate(20 8 16)" /><ellipse cx="13" cy="9" rx="7.500" ry="11.500" fill="#f4f2f0" stroke="#c75c4a" strokeWidth="1.200" transform="rotate(55 13 9)" /><path d="M5 13L20 5M12 3l1 13" stroke="#999" /><path d="M12 14l6 5" stroke="#1f7ad0" strokeWidth="2" /><ellipse cx="17" cy="23" rx="3" ry="5" fill="none" stroke="#1f7ad0" strokeWidth="2" /><ellipse cx="23" cy="18" rx="5" ry="2.500" fill="none" stroke="#1f7ad0" strokeWidth="2" /></svg>
        </AppTile>
        <AppTile running>
          <svg className="h-6 w-7" viewBox="0 0 28 24"><path d="M0 0h12l3 3h13v20H0z" fill="#e9a52c" /><path d="M0 6h28v17H0z" fill="#fccb62" /><path d="M5 24v-9l2-2h14l2 2v9h-5v-5h-8v5z" fill="#3c94dc" /></svg>
        </AppTile>
        <AppTile running>
          <svg className="size-[30px]" viewBox="0 0 30 30"><path d="M1 1h8v12H1z" fill="#e8a83c" /><path d="M3 1h3v12H3z" fill="#fbe19a" /><path d="M13 2h10v9M2 17v8h7" fill="none" stroke="#3f9a52" strokeDasharray="1.500 2" /><path d="M12 29l11-11M14 19l13 10" stroke="#b9c0c8" strokeWidth="2.200" /><path d="M11 20l4-4 4 2M22 15v4h5" stroke="#c8ced4" strokeWidth="2.200" fill="none" /></svg>
        </AppTile>
        <AppTile>
          <svg className="size-[30px]" viewBox="0 0 30 30"><circle cx="15" cy="15" r="15" fill="#b83211" /><path d="M11 25V8M6 13V7h12q5 0 5 4.500T18 16h-7" fill="none" stroke="#fff" strokeWidth="3.200" /></svg>
        </AppTile>
        <div className="flex w-[66px] items-center justify-center">
          <svg className="h-[20px] w-[21px]" viewBox="0 0 21 20" fill="none" stroke="#fff" strokeWidth="1.300"><path d="M2 0v4M2 7v13M7 0v3h13V0M7 6h13v8H7zM7 20v-3h13v3" /><circle cx="2" cy="6" r="1" fill="#fff" /></svg>
        </div>
        <div className="flex w-[55px] items-center justify-center">
          <div className="size-5 rounded-full border-[2.500px] border-white" />
        </div>
      </div>

      <div className="flex h-[50px] flex-1 items-center border border-[#c9c9c9] bg-[#f1f1f1] pl-[5px]">
        <svg className="mt-[4px] h-[46px] w-[95px] shrink-0" viewBox="0 0 95 46">
          <path d="M33 34q2-12 8-17 12-4 18 0 8-2 18 0l6-6h12v28H33z" fill="#b5651f" />
          <path d="M33 32q14 2 25-6l4 6 10-9 8 6 8-14 7-2v27H33z" fill="#8c4217" />
          <path d="M41 17q12-4 18 0l-4 5-14 1z" fill="#dd8b38" />
          <path d="M79 14l6-5h10v5l-10 5z" fill="#d98434" />
          <path d="M45 36q20-5 50-6v16H40z" fill="#6b8f5e" />
          <path d="M30 46q6-8 24-9-2-3-8-4h16l2 4q-6 1 2 4l6 5z" fill="#2db7ee" />
          <path d="M0 46q0-8 9-8t10 8z" fill="#4a4040" />
          <path d="M10 42q-4-14-8-20M10 42q0-20 7-36M11 36q5-8 10-12" stroke="#5a8a54" strokeWidth="1.500" fill="none" />
          <g fill="#9a86cf"><ellipse cx="17" cy="7" rx="3" ry="4" /><ellipse cx="9" cy="14" rx="4" ry="3" /><ellipse cx="20" cy="22" rx="3" ry="4" /><ellipse cx="7" cy="28" rx="4" ry="3" /><ellipse cx="14" cy="12" rx="2" ry="3" /></g>
          <circle cx="2" cy="19" r="3" fill="#fbbd18" />
          <g fill="#f6ac1e"><circle cx="24" cy="29" r="4.500" /><circle cx="30" cy="34" r="4.500" /><circle cx="27" cy="40" r="4.500" /><circle cx="20" cy="40" r="4.500" /><circle cx="18" cy="33" r="4.500" /></g>
          <circle cx="24" cy="35" r="3" fill="#dd7c12" />
          <path d="M46 0l1 4 4 1-4 1.500L46 11l-2-4-4-1.500 4-1z" fill="#b56fe4" />
          <circle cx="76" cy="7" r="2.500" fill="#55bff0" />
        </svg>
        <Fit w={117} className="ml-auto text-[18px] text-[#222]">اكتب هنا للبحث</Fit>
        <svg className="mr-[13px] ml-[15px] size-[21px]" viewBox="0 0 21 21" fill="none" stroke="#222" strokeWidth="1.400"><circle cx="13" cy="8" r="7" /><path d="M8 13l-7 7" /></svg>
      </div>
      <div className="flex h-[50px] w-[60px] items-center justify-center bg-[#1a2340]">
        <svg className="size-5" viewBox="0 0 20 20" fill="#fff"><path d="M0 2.800L8.300 1.600v7.900H0zM9.300 1.500L20 0v9.500H9.300zM0 10.500h8.300v7.900L0 17.200zM9.300 10.500H20V20L9.300 18.500z" /></svg>
      </div>
    </div>
  );
}

export default function App() {
  return (
    <div dir="ltr" className={clsx("relative flex h-[1080px] w-[1920px] flex-col overflow-hidden bg-[#efefef]", TAHOMA)}>
      <TitleBar />
      <Filters />
      <div className={clsx("mx-[2px] mt-11 flex h-[781px] shrink-0 flex-col", box)}>
        <div className="flex h-[26px] shrink-0 items-center justify-end border-b border-[#c8c8c8] bg-[#d0d0d0] pr-5">
          <Fit w={237} className="text-[18px] font-bold text-[#222]">قائمة الفواتير حسب الخيارات</Fit>
        </div>
        <div className="px-[7px] pt-[7px]">
          <InvoiceGrid />
          <TotalsPanel />
        </div>
      </div>
      <Taskbar />
      <PreviewDialog />
      <div className="pointer-events-none absolute top-[938px] left-[844px] flex flex-col font-bold">
        <Fit w={232} className="h-[80px] text-[74px] leading-[88px] text-[#969696]/25">مستقل</Fit>
        <Fit w={232} className="text-[34px] leading-[40px] text-[#969696]/65">mostaql.com</Fit>
      </div>
    </div>
  );
}
